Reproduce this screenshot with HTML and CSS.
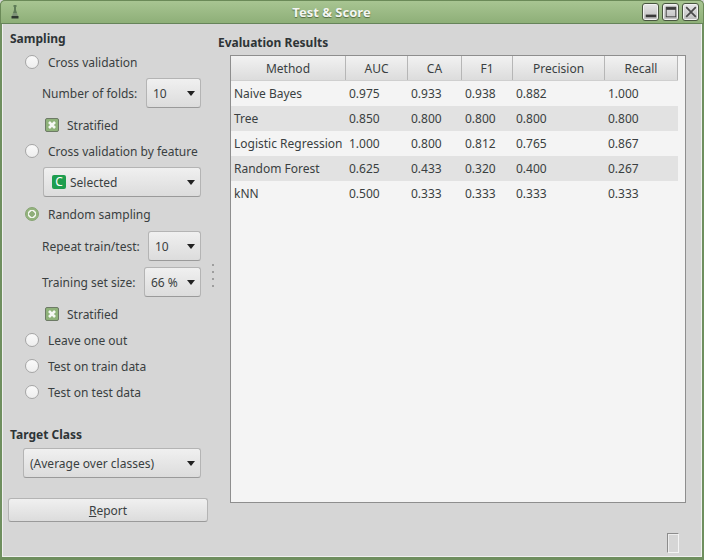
FILE: index.html
```html
<!DOCTYPE html>
<html lang="en">
<head>
<meta charset="utf-8">
<title>Test &amp; Score</title>
<link rel="stylesheet" href="styles.css">
</head>
<body>
<div class="window">
  <header class="titlebar">
    <svg class="appicon" width="12" height="14" viewBox="0 0 12 14"><path d="M4.500 0h3v2H7v3l1 3H4l1-3V2h-.5z" fill="#5f7c58"/><path d="M4 8h4l1 3H3z" fill="#7f9478"/><path d="M2.500 11h7v2.500h-7z" fill="#2f3a30"/></svg>
    <div class="wintitle">Test &amp; Score</div>
    <div class="winbtns">
      <div class="winbtn"><svg width="16" height="16" viewBox="0 0 16 16"><rect x="2" y="11" width="12" height="3" fill="#3a3a3a"/></svg></div>
      <div class="winbtn"><svg width="16" height="16" viewBox="0 0 16 16"><rect x="2.500" y="2.500" width="11" height="11" fill="none" stroke="#3a3a3a" stroke-width="1"/><rect x="2.500" y="2.500" width="11" height="3" fill="#3a3a3a"/></svg></div>
      <div class="winbtn"><svg width="16" height="16" viewBox="0 0 16 16"><path d="M2.500 2.500l11 11M13.500 2.500l-11 11" stroke="#4a4a4a" stroke-width="2" fill="none"/></svg></div>
    </div>
  </header>
  <div class="client">
    <main class="main">
      <aside class="left">
        <div class="group-title">Sampling</div>
        <div class="radio-row r-first"><span class="radio"></span><span>Cross validation</span></div>
        <div class="field f-folds"><span class="field-label">Number of folds:</span><div class="combo c-folds"><span>10</span><i class="caret"></i></div></div>
        <div class="check-row ck-a"><span class="check"><svg width="8" height="8" viewBox="0 0 8 8"><path d="M1 1l6 6M7 1L1 7" stroke="#f6f8f4" stroke-width="2.600"/></svg></span><span>Stratified</span></div>
        <div class="radio-row r-b"><span class="radio"></span><span>Cross validation by feature</span></div>
        <div class="field f-sel"><div class="combo c-sel"><span class="sel-wrap"><span class="badge">C</span><span>Selected</span></span><i class="caret"></i></div></div>
        <div class="radio-row r-c"><span class="radio on"></span><span>Random sampling</span></div>
        <div class="field f-rep"><span class="field-label">Repeat train/test:</span><div class="combo c-rep"><span>10</span><i class="caret"></i></div></div>
        <div class="field f-size"><span class="field-label">Training set size:</span><div class="combo c-size"><span>66 %</span><i class="caret"></i></div></div>
        <div class="check-row ck-b"><span class="check"><svg width="8" height="8" viewBox="0 0 8 8"><path d="M1 1l6 6M7 1L1 7" stroke="#f6f8f4" stroke-width="2.600"/></svg></span><span>Stratified</span></div>
        <div class="radio-row r-d"><span class="radio"></span><span>Leave one out</span></div>
        <div class="radio-row r-e"><span class="radio"></span><span>Test on train data</span></div>
        <div class="radio-row r-e"><span class="radio"></span><span>Test on test data</span></div>
        <div class="group-title t-target">Target Class</div>
        <div class="field f-target"><div class="combo c-target"><span>(Average over classes)</span><i class="caret"></i></div></div>
        <button class="report"><u>R</u>eport</button>
      </aside>
      <div class="splitter"><i></i><i></i><i></i><i></i></div>
      <section class="right">
        <div class="results-title">Evaluation Results</div>
        <div class="table">
          <div class="thead">
            <div class="th w1">Method</div><div class="th w2">AUC</div><div class="th w3">CA</div><div class="th w4">F1</div><div class="th w5">Precision</div><div class="th w6">Recall</div>
          </div>
          <div class="tr"><div class="td w1">Naive Bayes</div><div class="td w2">0.975</div><div class="td w3">0.933</div><div class="td w4">0.938</div><div class="td w5">0.882</div><div class="td w6">1.000</div></div>
          <div class="tr alt"><div class="td w1">Tree</div><div class="td w2">0.850</div><div class="td w3">0.800</div><div class="td w4">0.800</div><div class="td w5">0.800</div><div class="td w6">0.800</div></div>
          <div class="tr"><div class="td w1">Logistic Regression</div><div class="td w2">1.000</div><div class="td w3">0.800</div><div class="td w4">0.812</div><div class="td w5">0.765</div><div class="td w6">0.867</div></div>
          <div class="tr alt"><div class="td w1">Random Forest</div><div class="td w2">0.625</div><div class="td w3">0.433</div><div class="td w4">0.320</div><div class="td w5">0.400</div><div class="td w6">0.267</div></div>
          <div class="tr"><div class="td w1">kNN</div><div class="td w2">0.500</div><div class="td w3">0.333</div><div class="td w4">0.333</div><div class="td w5">0.333</div><div class="td w6">0.333</div></div>
        </div>
      </section>
    </main>
    <div class="statusbar"><div class="grip"></div></div>
  </div>
</div>
</body>
</html>
```
FILE: styles.css
```css
* { box-sizing: border-box; }
html, body { margin: 0; padding: 0; }
body { width: 704px; height: 560px; overflow: hidden; font-family: "Noto Sans", sans-serif; font-size: 12px; color: #2e3436; background: #d6d6d6; }
.window { width: 704px; height: 560px; display: flex; flex-direction: column; background: #6f8f5f; border-radius: 5px 5px 0 0; overflow: hidden; }
.titlebar { height: 24px; flex: none; display: flex; align-items: center; padding: 0 4px 0 8px; background: linear-gradient(#a8c592, #8eaf78); border: 1px solid #6b8a58; border-bottom: 1px solid #66845a; border-radius: 5px 5px 0 0; }
.appicon { flex: none; }
.wintitle { flex: 1; text-align: center; font-weight: 700; font-size: 13px; line-height: 17px; color: #f4f6f2; text-shadow: 0 1px 1px #53693f; }
.winbtns { display: flex; gap: 3px; }
.winbtn { width: 17px; height: 18px; background: linear-gradient(#e6e6e6, #bdbdbd); border: 1px solid #48553f; border-radius: 3px; box-shadow: inset 0 0 0 1px #f2f2f2; display: flex; align-items: center; justify-content: center; overflow: hidden; }
.winbtn svg { width: 14px; height: 14px; flex: none; }
.client { flex: 1; margin: 0 2px 3px 2px; background: #d6d6d6; border-left: 1px solid #f0f0f0; border-right: 1px solid #f0f0f0; border-bottom: 1px solid #f0f0f0; display: flex; flex-direction: column; min-height: 0; }
.main { flex: 1; display: flex; min-height: 0; }
.left { width: 198px; flex: none; padding: 7px 0 0 7px; display: flex; flex-direction: column; }
.group-title { font-weight: 700; height: 16px; line-height: 16px; color: #2e3436; }
.radio-row { display: flex; align-items: center; height: 18px; margin-left: 15px; color: #3a3f41; }
.radio { width: 14px; height: 14px; border-radius: 50%; background: linear-gradient(#fafafa, #eeeeee); border: 1px solid #a6a6a6; margin-right: 9px; flex: none; }
.radio.on { background: radial-gradient(circle, #8fae7a 0 2.500px, #f2f5ee 3px 4px, #94b47e 4.500px); border-color: #86a472; }
.r-first { margin-top: 6px; }
.r-b { margin-top: 8px; }
.r-c { margin-top: 8px; }
.r-d { margin-top: 8px; }
.r-e { margin-top: 8px; }
.field { display: flex; align-items: center; justify-content: space-between; height: 30px; margin-left: 32px; }
.field-label { color: #3a3f41; }
.f-folds { margin-top: 7px; }
.f-sel { margin-top: 7px; margin-left: 33px; }
.f-rep { margin-top: 8px; }
.f-size { margin-top: 6px; }
.f-target { margin-top: 5px; margin-left: 13px; }
.combo { height: 30px; display: flex; align-items: center; justify-content: space-between; padding: 0 5px 0 6px; background: linear-gradient(#f0f0f0, #dcdcdc); border: 1px solid #b4b4b4; border-bottom-color: #9a9a9a; border-radius: 3px; color: #3a3f41; }
.c-folds { width: 55px; }
.c-sel { width: 158px; padding-left: 8px; }
.c-rep { width: 53px; }
.c-size { width: 57px; }
.c-target { width: 178px; }
.caret { width: 0; height: 0; border-left: 4.500px solid transparent; border-right: 4.500px solid transparent; border-top: 5px solid #222; flex: none; }
.sel-wrap { display: flex; align-items: center; gap: 4px; }
.badge { width: 14px; height: 14px; border-radius: 2px; background: #1e9e4f; color: #fff; display: flex; align-items: center; justify-content: center; font-size: 12px; line-height: 14px; }
.check-row { display: flex; align-items: center; height: 18px; margin-left: 35px; color: #3a3f41; }
.check { width: 14px; height: 14px; background: #8fb27a; border: 1px solid #6d7a66; margin-right: 8px; display: flex; align-items: center; justify-content: center; flex: none; border-radius: 2px; }
.check svg { width: 8px; height: 8px; }
.ck-a { margin-top: 8px; }
.ck-b { margin-top: 8px; }
.t-target { margin-top: 26px; }
.report { margin: 20px 0 0 -2px; width: 200px; flex: none; height: 24px; padding: 0; font: inherit; color: #3a3f41; background: linear-gradient(#f0f0f0, #dcdcdc); border: 1px solid #b4b4b4; border-bottom-color: #9a9a9a; border-radius: 3px; }
.splitter { width: 11px; margin-left: 6px; flex: none; display: flex; flex-direction: column; gap: 5px; align-items: center; padding-top: 240px; }
.splitter i { width: 2px; height: 2px; background: #9e9e9e; display: block; }
.right { width: 468px; flex: none; padding-top: 11px; display: flex; flex-direction: column; }
.results-title { font-weight: 700; height: 16px; line-height: 16px; color: #2e3436; }
.table { margin: 4px 0 0 12px; width: 456px; height: 448px; background: #f4f4f4; border: 1px solid #8e8e8e; }
.thead { display: flex; height: 25px; width: 447px; background: linear-gradient(#f2f2f2, #dcdcdc); border-bottom: 1px solid #cfcfcf; }
.th { text-align: center; line-height: 26px; border-right: 1px solid #b6b6b6; color: #3a3f41; }
.tr { display: flex; height: 25px; width: 447px; }
.tr.alt { background: #e2e2e2; }
.td { line-height: 25px; padding-left: 3px; color: #3a3f41; white-space: nowrap; }
.w1 { width: 115px; }
.w2 { width: 62px; }
.w3 { width: 54px; }
.w4 { width: 51px; }
.w5 { width: 92px; }
.w6 { width: 73px; }
.statusbar { height: 25px; flex: none; display: flex; justify-content: flex-end; padding: 2px 22px 0 0; }
.grip { width: 12px; height: 20px; border: 1px solid #8c8c8c; border-right-color: #f4f4f4; border-bottom-color: #f4f4f4; box-shadow: inset 1px 1px 0 #ededed; }
```
